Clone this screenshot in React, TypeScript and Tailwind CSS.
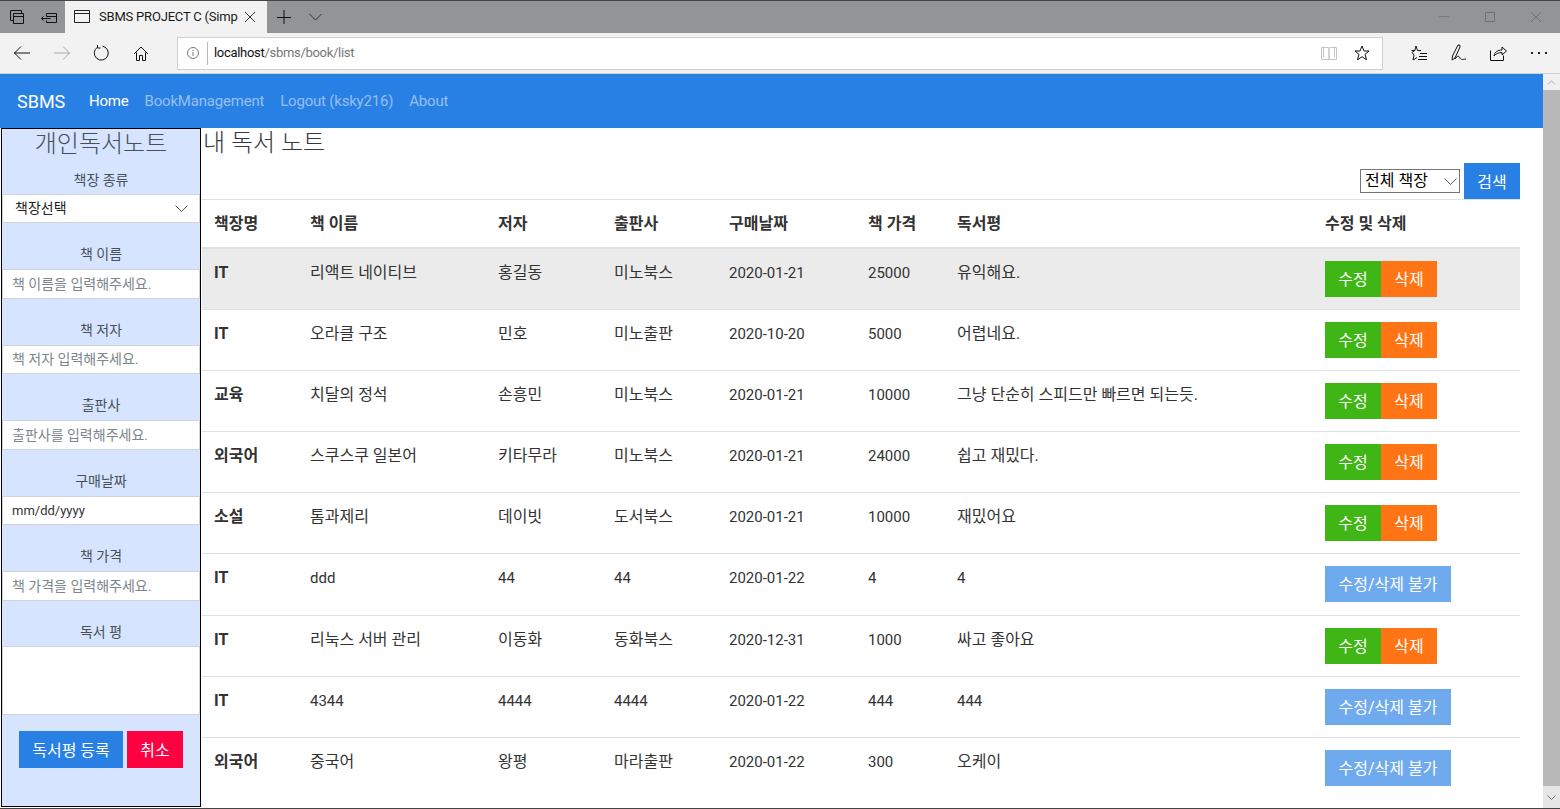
import { ChevronUp } from 'lucide-react'

const font = 'font-["Roboto","Noto_Sans_CJK_KR",sans-serif]'

interface Book {
  shelf: string
  name: string
  author: string
  publisher: string
  date: string
  price: string
  review: string
  editable: boolean
}

const books: Book[] = [
  { shelf: 'IT', name: '리액트 네이티브', author: '홍길동', publisher: '미노북스', date: '2020-01-21', price: '25000', review: '유익해요.', editable: true },
  { shelf: 'IT', name: '오라클 구조', author: '민호', publisher: '미노출판', date: '2020-10-20', price: '5000', review: '어렵네요.', editable: true },
  { shelf: '교육', name: '치달의 정석', author: '손흥민', publisher: '미노북스', date: '2020-01-21', price: '10000', review: '그냥 단순히 스피드만 빠르면 되는듯.', editable: true },
  { shelf: '외국어', name: '스쿠스쿠 일본어', author: '키타무라', publisher: '미노북스', date: '2020-01-21', price: '24000', review: '쉽고 재밌다.', editable: true },
  { shelf: '소설', name: '톰과제리', author: '데이빗', publisher: '도서북스', date: '2020-01-21', price: '10000', review: '재밌어요', editable: true },
  { shelf: 'IT', name: 'ddd', author: '44', publisher: '44', date: '2020-01-22', price: '4', review: '4', editable: false },
  { shelf: 'IT', name: '리눅스 서버 관리', author: '이동화', publisher: '동화북스', date: '2020-12-31', price: '1000', review: '싸고 좋아요', editable: true },
  { shelf: 'IT', name: '4344', author: '4444', publisher: '4444', date: '2020-01-22', price: '444', review: '444', editable: false },
  { shelf: '외국어', name: '중국어', author: '왕평', publisher: '마라출판', date: '2020-01-22', price: '300', review: '오케이', editable: false },
]

function SelectArrow() {
  return (
    <svg width="13" height="7" fill="none" stroke="#555" strokeWidth="1">
      <path d="M.5.5l6 6 6-6" />
    </svg>
  )
}

function TitleBar() {
  return (
    <div className="flex h-[33px] border-t border-[#444] bg-[#939496]">
      <div className="flex w-[65px] items-center">
        <svg width="65" height="32" fill="none" stroke="#111" strokeWidth="1">
          <path d="M10.500 9.500h11v3M10.500 9.500v10h3M13.500 12.500h10v10h-10zM13.500 15.500h10" />
          <path d="M46.500 12.500h10v9h-10v-2M46.500 12.500v3M41.500 17.500h9M43.500 15.500l-2 2 2 2M46.500 15.500h10" />
        </svg>
      </div>
      <div className="flex h-[32px] w-[202px] items-center bg-[#f2f2f2] pl-[9px] text-[#1a1a1a]">
        <svg width="16" height="14" fill="none" stroke="#222" strokeWidth="1">
          <path d="M.5.5h15v12H.5zM.5 3.500h15" />
        </svg>
        <span className="ml-[9px] w-[146px] text-[13px] tracking-[-0.2px] whitespace-nowrap">SBMS PROJECT C (Simp</span>
        <svg width="10" height="10" stroke="#333" strokeWidth="1">
          <path d="M0 0l10 10M10 0L0 10" />
        </svg>
      </div>
      <div className="flex items-center pl-[10px]">
        <svg width="14" height="14" stroke="#111" strokeWidth="1">
          <path d="M7 0v14M0 7.500h14" />
        </svg>
        <svg className="ml-[18px]" width="13" height="8" fill="none" stroke="#333" strokeWidth="1">
          <path d="M.5 1l6 6 6-6" />
        </svg>
      </div>
      <div className="ml-auto flex items-center gap-[36px] pr-[19px]">
        <svg width="10" height="2" stroke="#7c7c7e">
          <path d="M0 .5h10" />
        </svg>
        <svg width="10" height="10" fill="none" stroke="#6f6f72">
          <path d="M.5.5h9v9h-9z" />
        </svg>
        <svg width="10" height="10" stroke="#6f6f72">
          <path d="M0 0l10 10M10 0L0 10" />
        </svg>
      </div>
    </div>
  )
}

function ToolBar() {
  return (
    <div className="flex h-[41px] items-center border-b border-[#cfcfcf] bg-[#f2f2f2]">
      <div className="flex w-[177px] items-center">
        <svg className="ml-[14px]" width="16" height="14" fill="none" stroke="#111" strokeWidth="1">
          <path d="M0 7h16M7 .5L.5 7 7 13.500" />
        </svg>
        <svg className="ml-[24px]" width="16" height="14" fill="none" stroke="#a8a8a8" strokeWidth="1">
          <path d="M0 7h16M9 .5L15.500 7 9 13.500" />
        </svg>
        <svg className="ml-[23px]" width="16" height="16" fill="none" stroke="#111" strokeWidth="1">
          <path d="M4.500 2.200A7 7 0 1 0 9.500 1.200M4.500 0v3h3" />
        </svg>
        <svg className="ml-[24px]" width="16" height="15" fill="none" stroke="#111" strokeWidth="1">
          <path d="M1 8l7-7 7 7M3.500 6.500v8h3v-5h3v5h3v-8" />
        </svg>
      </div>
      <div className="flex h-[33px] w-[1206px] items-center border border-[#cfcfcf] bg-white">
        <svg className="ml-[9px]" width="12" height="12" fill="none" stroke="#777" strokeWidth="1">
          <circle cx="6" cy="6" r="5.500" />
          <path d="M6 5v4M6 3v1" />
        </svg>
        <div className="ml-[8px] h-[23px] border-l border-[#b8b8b8]" />
        <span className="ml-[6px] text-[13px] tracking-[-0.3px] text-[#777]">
          <span className="text-[#111]">localhost</span>/sbms/book/list
        </span>
        <svg className="ml-auto" width="16" height="14" fill="none" stroke="#c4c4c4" strokeWidth="1">
          <path d="M.5 1.500h6.500q1 0 1 1v11H.5zM15.500 1.500H9q-1 0-1 1v11h7.500zM2.500.5v11M13.500.5v11" />
        </svg>
        <svg className="mr-[12px] ml-[17px]" width="16" height="16" fill="none" stroke="#111" strokeWidth="1">
          <path d="M8 1l2 5h5l-4 3.400 1.600 5.400L8 11.700l-4.600 3.100L5 9.400 1 6h5z" />
        </svg>
      </div>
      <div className="ml-[28px] flex items-center">
        <svg width="16" height="16" fill="none" stroke="#111" strokeWidth="1">
          <path d="M5 1l1.500 4.500H10M.5 5.500H3.800M5 1L3.800 5.500 1 7.500l2 2.500-1 5 4-2.500M9 8.500h7M8 11.500h8M7 14.500h9" />
        </svg>
        <svg className="ml-[24px]" width="16" height="18" fill="none" stroke="#111" strokeWidth="1">
          <path d="M7 1L1.500 12l-.5 4 3-2 5-11q.5-3-2-2zM4 15c3-4 4-3 5-1s2 1.500 6 1" />
        </svg>
        <svg className="ml-[23px]" width="17" height="16" fill="none" stroke="#111" strokeWidth="1">
          <path d="M.5 5.500v10h13v-5M4 11c.5-4 4-6 8-6V2l4.500 4-4.500 4V7.500c-3 0-6 1-8 3.500z" />
        </svg>
        <div className="ml-[24px] flex gap-[5px]">
          <div className="h-[2px] w-[2px] bg-[#222]" />
          <div className="h-[2px] w-[2px] bg-[#222]" />
          <div className="h-[2px] w-[2px] bg-[#222]" />
        </div>
      </div>
    </div>
  )
}

function NavBar() {
  return (
    <div className="flex h-[54px] items-center bg-[#2980e4] pl-[17px] text-[15px] tracking-[-0.2px] text-white">
      <span className="w-[72px] text-[18px] tracking-normal">SBMS</span>
      <span>Home</span>
      <span className="ml-[16px] text-white/50">BookManagement</span>
      <span className="ml-[16px] text-white/50">Logout (ksky216)</span>
      <span className="ml-[16px] text-white/50">About</span>
    </div>
  )
}

function Field({ label, placeholder, dark }: { label: string; placeholder: string; dark?: boolean }) {
  return (
    <div className="mb-[16px]">
      <div className="mb-[3px] h-[27px] pt-[3px] text-center text-[14px] leading-[24px] text-[#495057]">{label}</div>
      <div className={`flex h-[29.500px] items-center border border-[#ced4da] bg-white pt-[1px] pl-[9px] whitespace-nowrap ${dark ? 'text-[13px] text-[#333]' : 'text-[14px] text-[#7d858c]'}`}>
        {placeholder}
      </div>
    </div>
  )
}

function Sidebar() {
  return (
    <div className="h-[679px] w-[200px] shrink-0 border border-black bg-[#d6e4ff]">
      <div className="h-[32px] text-center text-[24px] leading-[31px] font-light text-[#495057]">개인독서노트</div>
      <div className="mt-[5.500px] mb-[16px]">
        <div className="mb-[3px] h-[24px] pt-[1px] text-center text-[14px] leading-[24px] text-[#495057]">책장 종류</div>
        <div className="flex h-[29.500px] items-center justify-between border border-[#ced4da] bg-white pt-[1px] pr-[11px] pl-[12px] text-[14px] text-[#222]">
          책장선택
          <SelectArrow />
        </div>
      </div>
      <Field label="책 이름" placeholder="책 이름을 입력해주세요." />
      <Field label="책 저자" placeholder="책 저자 입력해주세요." />
      <Field label="출판사" placeholder="출판사를 입력해주세요." />
      <Field label="구매날짜" placeholder="mm/dd/yyyy" dark />
      <Field label="책 가격" placeholder="책 가격을 입력해주세요." />
      <div className="h-[27px] pt-[3px] text-center text-[14px] leading-[24px] text-[#495057]">독서 평</div>
      <div className="mt-[2.400px] h-[69.600px] border border-[#ced4da] bg-white" />
      <div className="mt-[16px] flex justify-center gap-[4px]">
        <button className="h-[37px] w-[104px] bg-[#2980e4] pt-[2px] text-[16px] text-white">독서평 등록</button>
        <button className="h-[37px] w-[56px] bg-[#ff0040] pt-[2px] text-[16px] text-white">취소</button>
      </div>
    </div>
  )
}

function BookRow({ book, index }: { book: Book; index: number }) {
  const cell = 'p-[12px] align-top leading-[24px]'
  const sized = (text: string) => (/^[\x00-\x7f]+$/.test(text) ? `${cell} text-[15px]` : cell)
  const rowClass =
    index === 0
      ? 'h-[61px] bg-[#ebebeb]'
      : index === 5
        ? 'h-[62px] border-t border-[#dee2e6]'
        : 'h-[61px] border-t border-[#dee2e6]'
  return (
    <tr className={rowClass}>
      <td className={`${cell} font-bold`}>{book.shelf}</td>
      <td className={sized(book.name)}>{book.name}</td>
      <td className={sized(book.author)}>{book.author}</td>
      <td className={sized(book.publisher)}>{book.publisher}</td>
      <td className={sized(book.date)}>{book.date}</td>
      <td className={sized(book.price)}>{book.price}</td>
      <td className={sized(book.review)}>{book.review}</td>
      <td className={cell}>
        {book.editable ? (
          <div className="flex">
            <button className="h-[36px] w-[56px] bg-[#40b516] pt-[2px] text-[16px] text-white">수정</button>
            <button className="h-[36px] w-[56px] bg-[#ff7516] pt-[2px] text-[16px] text-white">삭제</button>
          </div>
        ) : (
          <button className="h-[36px] w-[126px] bg-[#70aaee] pt-[3px] text-[16px] text-white">수정/삭제 불가</button>
        )}
      </td>
    </tr>
  )
}

function Main() {
  const headers = ['책장명', '책 이름', '저자', '출판사', '구매날짜', '책 가격', '독서평', '수정 및 삭제']
  const widths = ['w-[96px]', 'w-[188px]', 'w-[116px]', 'w-[115px]', 'w-[139px]', 'w-[89px]', 'w-[368px]', 'w-[207px]']
  return (
    <div className="ml-[1px] h-[679px] w-[1318px] overflow-hidden text-[16px] text-[#333]">
      <div className="h-[35px] pl-[1px] text-[24px] leading-[30px] font-light text-[#343a40]">내 독서 노트</div>
      <div className="flex h-[36px] items-center justify-end gap-[4px]">
        <div className="flex h-[24px] w-[100px] items-center justify-between border border-[#767676] bg-white pr-[2px] pl-[4px] text-[16px] text-black">
          전체 책장
          <SelectArrow />
        </div>
        <button className="h-[36px] w-[56px] bg-[#2980e4] pt-[3px] text-[16px] text-white">검색</button>
      </div>
      <table className="w-full table-fixed">
        <thead>
          <tr className="h-[48px] border-t border-b-2 border-[#dee2e6]">
            {headers.map((h, i) => (
              <th key={h} className={`${widths[i]} px-[12px] pt-[2px] text-left font-bold`}>{h}</th>
            ))}
          </tr>
        </thead>
        <tbody>
          {books.map((b, i) => (
            <BookRow key={b.name} book={b} index={i} />
          ))}
        </tbody>
      </table>
    </div>
  )
}

function ScrollBar() {
  return (
    <div className="flex w-[17px] shrink-0 flex-col bg-[#f0f0f0]">
      <div className="flex h-[16px] items-center justify-center">
        <ChevronUp size={13} strokeWidth={1} color="#777" />
      </div>
      <div className="flex-1 bg-[#b8b8b8]" />
      <div className="flex h-[22px] items-center justify-center bg-[#e6e6e6]">
        <svg width="9" height="5" fill="none" stroke="#777" strokeWidth="1">
          <path d="M.5.5l4 4 4-4" />
        </svg>
      </div>
    </div>
  )
}

export default function App() {
  return (
    <div className={`${font} flex h-[809px] w-[1560px] flex-col overflow-hidden border-b border-[#444] bg-white`}>
      <TitleBar />
      <ToolBar />
      <div className="flex min-h-0 flex-1">
        <div className="flex min-w-0 flex-1 flex-col">
          <NavBar />
          <div className="flex pl-[1px]">
            <Sidebar />
            <Main />
          </div>
        </div>
        <ScrollBar />
      </div>
    </div>
  )
}
